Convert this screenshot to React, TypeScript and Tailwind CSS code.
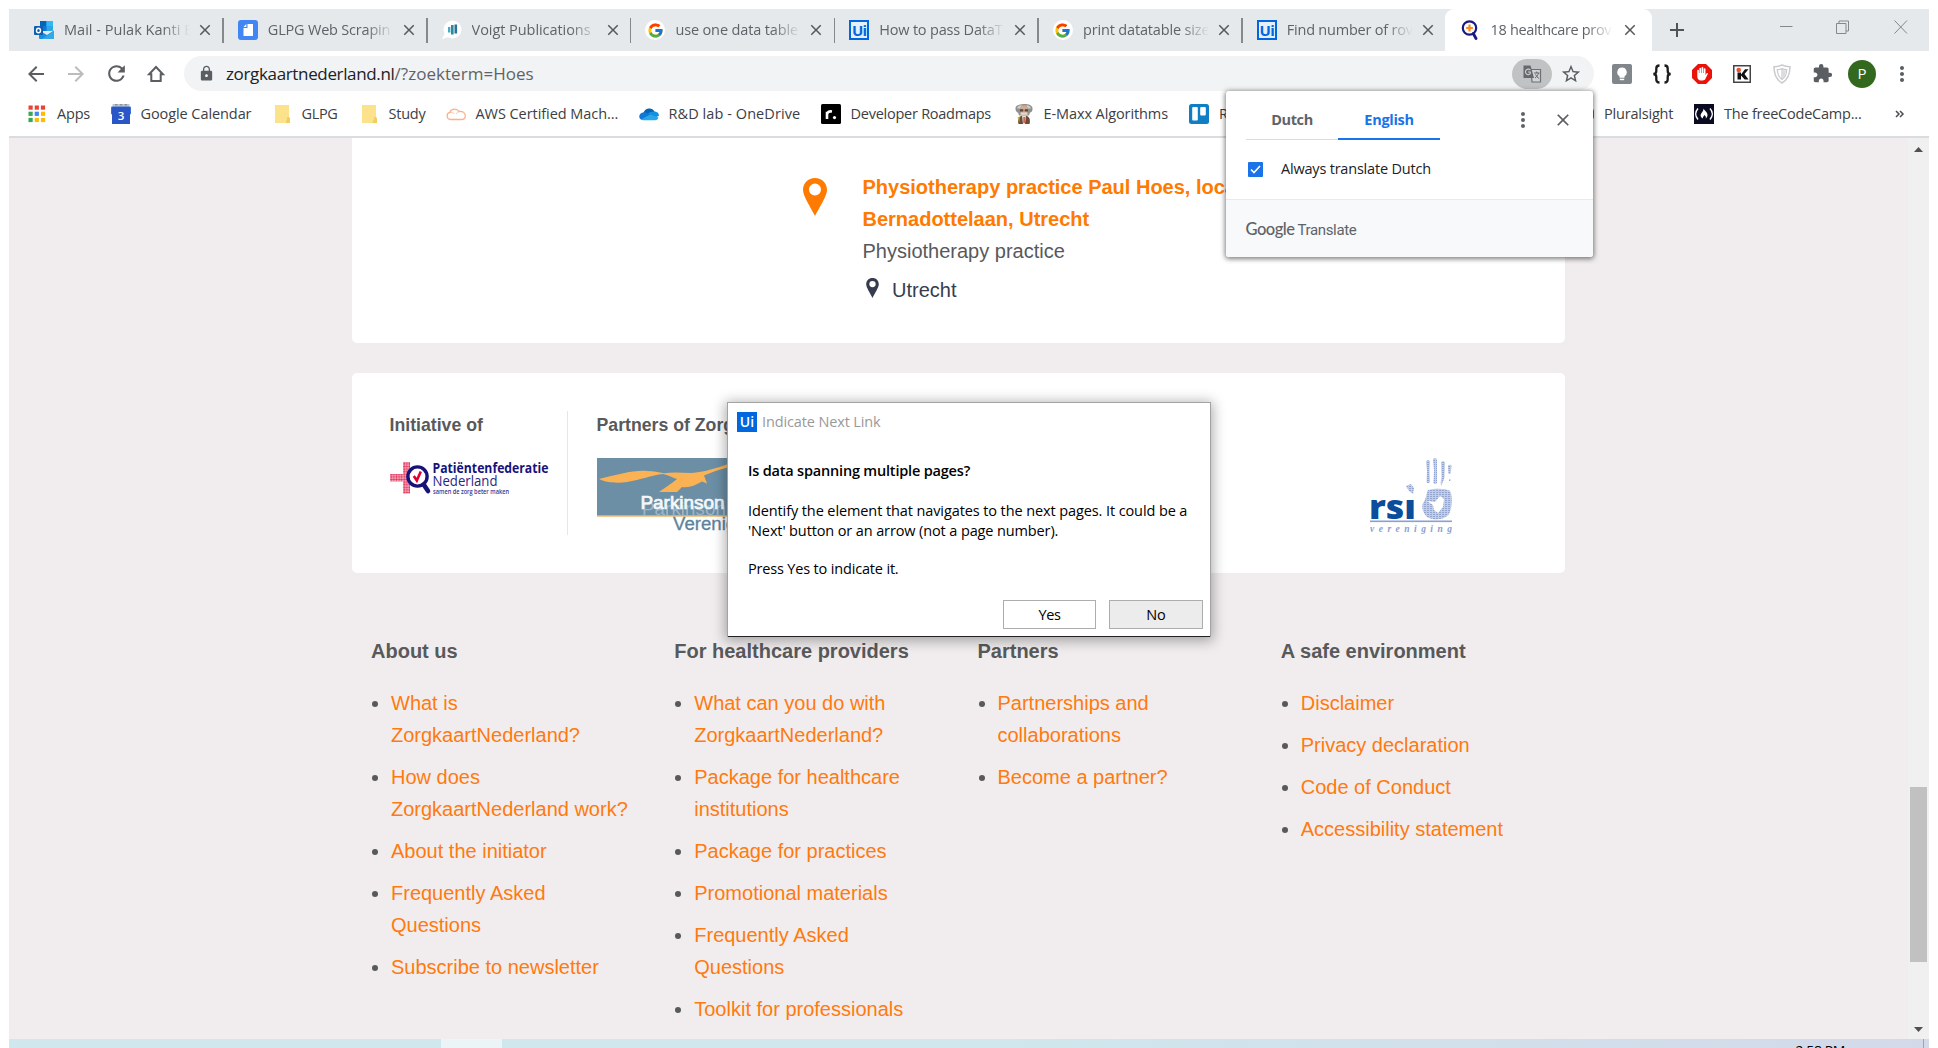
import React from "react";
import {
  MdArrowBack,
  MdArrowForward,
  MdRefresh,
  MdLock,
  MdClose,
  MdAdd,
  MdMoreVert,
  MdExtension,
  MdStarBorder,
} from "react-icons/md";
import { FcGoogle } from "react-icons/fc";

const UI = "font-['Open_Sans','Noto_Sans',sans-serif]";

/* ---------- favicons ---------- */

function OutlookIcon() {
  return (
    <svg width="20" height="20" viewBox="0 0 20 20">
      <rect x="6" y="1" width="13" height="10" rx="1" fill="#28a8ea" />
      <rect x="6" y="1" width="6.5" height="5" fill="#0364b8" />
      <rect x="12.5" y="1" width="6.5" height="5" fill="#32b8f4" />
      <rect x="6" y="6" width="6.5" height="5" fill="#0a78d4" />
      <path d="M5 10.500l8 4.500 7-4.500V18a1 1 0 0 1-1 1H6a1 1 0 0 1-1-1z" fill="#1490df" />
      <path d="M20 10.500L8 19h11a1 1 0 0 0 1-1z" fill="#32a9e7" />
      <rect x="0" y="6" width="9" height="9" rx="1" fill="#0f5fb0" />
      <ellipse cx="4.500" cy="10.500" rx="2" ry="2.300" fill="none" stroke="#fff" strokeWidth="1.400" />
    </svg>
  );
}

function DocIcon() {
  return (
    <svg width="20" height="20" viewBox="0 0 20 20">
      <rect width="20" height="20" rx="3" fill="#4087f5" />
      <path d="M9.500 4H15v12H5.500V8h4z" fill="#fff" />
      <path d="M8.300 4v3H5.500z" fill="#fff" />
    </svg>
  );
}

function VoigtIcon() {
  return (
    <svg width="20" height="20" viewBox="0 0 20 20">
      <circle cx="10.500" cy="9.500" r="9" fill="#fff" />
      <path d="M0 19l3-6 4 4z" fill="#fff" />
      <rect x="6" y="7" width="2.400" height="5.500" fill="#49a9bd" />
      <rect x="9" y="5" width="2.600" height="9.500" fill="#2a8aa6" />
      <rect x="12.500" y="4.500" width="2.600" height="9" fill="#2a7396" />
    </svg>
  );
}

function GoogleIcon() {
  return (
    <span className="flex size-5 items-center justify-center rounded-full bg-white">
      <FcGoogle size={17} />
    </span>
  );
}

function UiIcon() {
  return (
    <span className="flex size-5 items-center justify-center border-2 border-[#0067df] bg-[#e6eef8] font-['Open_Sans',sans-serif] text-[15px] leading-none font-bold tracking-[-0.8px] text-[#0067df]">
      Ui
    </span>
  );
}

function ZorgIcon() {
  return (
    <svg width="20" height="20" viewBox="0 0 20 20">
      <circle cx="9.500" cy="8" r="6.700" fill="#fff" stroke="#1a1a80" strokeWidth="2.200" />
      <path d="M13.300 13.500l2.700 5" stroke="#1a1a80" strokeWidth="2.800" strokeLinecap="round" />
      <path d="M9.500 4.600v6.800M6.100 8h6.800" stroke="#ff8a1e" strokeWidth="2.200" />
    </svg>
  );
}

/* ---------- tab strip ---------- */

const tabs: { title: string; icon: React.ReactNode; cls: string }[] = [
  { title: "Mail - Pulak Kanti B", icon: <OutlookIcon />, cls: "tracking-[0.02px]" },
  { title: "GLPG Web Scrapin", icon: <DocIcon />, cls: "tracking-[-0.2px]" },
  { title: "Voigt Publications", icon: <VoigtIcon />, cls: "tracking-[-0.06px]" },
  { title: "use one data table", icon: <GoogleIcon />, cls: "tracking-[-0.14px]" },
  { title: "How to pass DataT", icon: <UiIcon />, cls: "tracking-[-0.18px]" },
  { title: "print datatable size", icon: <GoogleIcon />, cls: "tracking-[-0.16px]" },
  { title: "Find number of rov", icon: <UiIcon />, cls: "tracking-[-0.22px]" },
];

const FADE =
  "overflow-hidden whitespace-nowrap [mask-image:linear-gradient(to_right,#000_78%,transparent)]";

function TabStrip() {
  return (
    <div className={`flex h-[42px] bg-[#e6e9ec] pl-[11px] text-[14.5px] text-[#5f6368] ${UI}`}>
      {tabs.map((t, i) => (
        <div key={i} className="flex w-[203.8px] shrink-0 items-center pl-[14px]">
          <span className="flex size-5 shrink-0 items-center">{t.icon}</span>
          <span className={`ml-[10px] w-[126px] shrink-0 leading-5 ${FADE} ${t.cls}`}>{t.title}</span>
          <MdClose size={18} className="ml-[6px] shrink-0 text-[#55585c]" />
          {i < 6 && <span className="ml-auto h-[25px] w-[1.5px] shrink-0 bg-[#85898e]" />}
        </div>
      ))}
      <div className="-ml-[2px] flex w-[207px] shrink-0 items-center rounded-t-[9px] bg-white pl-[15px]">
        <span className="flex size-5 shrink-0 items-center">
          <ZorgIcon />
        </span>
        <span className={`ml-[11px] w-[122px] leading-5 tracking-[-0.34px] ${FADE}`}>18 healthcare prov</span>
        <MdClose size={18} className="ml-[8px] shrink-0 text-[#55585c]" />
      </div>
      <div className="flex w-[50px] items-center justify-center">
        <MdAdd size={24} className="text-[#505357]" />
      </div>
      <div className="flex flex-1 items-start justify-end pt-[9px] pr-[3px]">
        <svg width="146" height="20" viewBox="0 0 146 20" fill="none" stroke="#85888b" strokeWidth="1">
          <path d="M0 8.500h12.500" />
          <path d="M56.500 5.500h9.500v10h-9.500zM59 5.500V3h9.500v10h-2.500" />
          <path d="M114.500 2.500l12.500 13M127 2.500l-12.500 13" />
        </svg>
      </div>
    </div>
  );
}

/* ---------- toolbar ---------- */

function Slot({ children }: { children: React.ReactNode }) {
  return <div className="flex w-10 shrink-0 items-center justify-center">{children}</div>;
}

function Toolbar() {
  return (
    <div className={`flex h-[45px] items-center pl-[7px] text-[#5a5d61] ${UI}`}>
      <Slot>
        <MdArrowBack size={24} />
      </Slot>
      <Slot>
        <MdArrowForward size={24} className="text-[#babcbe]" />
      </Slot>
      <Slot>
        <MdRefresh size={25} />
      </Slot>
      <Slot>
        <svg width="18" height="18" viewBox="0 0 18 18" fill="none" stroke="#5a5d61" strokeWidth="2">
          <path d="M9 2L2 9.300h2.300V16h9.400V9.300H16z" />
        </svg>
      </Slot>
      <div className="ml-2 flex h-[35px] w-[1410px] shrink-0 items-center rounded-full bg-[#f1f3f4] pl-[14px] text-[17px]">
        <MdLock size={17} />
        <div className="ml-[11px] flex leading-6">
          <span className="tracking-[-0.35px] text-[#202124]">zorgkaartnederland.nl</span>
          <span className="tracking-[0.04px] text-[#5f6368]">/?zoekterm=Hoes</span>
        </div>
        <span className="ml-auto flex h-[30px] w-10 items-center justify-center rounded-full bg-[#c0c2c3]">
          <svg width="20" height="20" viewBox="0 0 20 20">
            <path d="M9 5.500h9.500V18H10z" fill="#d0d2d3" stroke="#6d7074" strokeWidth="1.200" />
            <path d="M1.500 1.500h7l3.500 12.500H1.500z" fill="#65686c" />
            <path d="M8.300 6.200A2.700 2.700 0 1 0 8.300 9.600V8H6" fill="none" stroke="#c9cbcc" strokeWidth="1.200" />
            <path d="M12 9h5.500M14.800 7.500V9M16.500 9c-.5 2-2 4-3.500 5M13.500 10.500c.8 1.800 2 3 3.500 4" fill="none" stroke="#65686c" strokeWidth="1" />
          </svg>
        </span>
        <MdStarBorder size={22} className="mr-3 ml-2" />
      </div>
      <div className="ml-[8px] flex">
        <Slot>
          <svg width="20" height="20" viewBox="0 0 20 20">
            <rect width="20" height="20" rx="2" fill="#80868b" />
            <path d="M10 3.500a4.700 4.700 0 0 0-2.500 8.700v1.600h5v-1.600A4.700 4.700 0 0 0 10 3.500z" fill="#fff" />
            <rect x="7.800" y="14.700" width="4.400" height="1.500" fill="#fff" />
          </svg>
        </Slot>
        <Slot>
          <svg width="20" height="20" viewBox="0 0 20 20" fill="none" stroke="#1c1c1c" strokeWidth="2.300">
            <path d="M7.500 1.500C5 1.500 4.300 2.500 4.300 4.500v2.500c0 2-1 3-3 3 2 0 3 1 3 3v2.500c0 2 .7 3 3.200 3M12.500 1.500c2.500 0 3.200 1 3.200 3v2.500c0 2 1 3 3 3-2 0-3 1-3 3v2.500c0 2-.7 3-3.200 3" />
          </svg>
        </Slot>
        <Slot>
          <svg width="20" height="20" viewBox="0 0 20 20">
            <path d="M6 0h8l6 6v8l-6 6H6l-6-6V6z" fill="#ea1209" />
            <path d="M5.300 11V6.500a.8.8 0 0 1 1.600 0V9h.5V4.500a.8.8 0 0 1 1.700 0V9h.5V3.800a.8.8 0 0 1 1.700 0V9h.5V5a.8.8 0 0 1 1.700 0v6l1-1.500c.7-.8 1.700-.3 1.300.6l-2.500 5c-.5 1-1.300 1.400-2.700 1.400H9c-2.500 0-3.700-1.800-3.700-4z" fill="#fff" />
          </svg>
        </Slot>
        <Slot>
          <svg width="18" height="18" viewBox="0 0 18 18">
            <rect x=".75" y=".75" width="16.500" height="16.500" fill="#fff" stroke="#444" strokeWidth="1.500" />
            <path d="M4.500 7.500H8v2L12 4.200h3.500L11.500 9l4 5.500h-3.800L8 10.500v4H4.500z" fill="#111" />
            <circle cx="5.700" cy="5" r="2.300" fill="#f04e30" />
          </svg>
        </Slot>
        <Slot>
          <svg width="18" height="20" viewBox="0 0 18 20" fill="none" stroke="#c9cbcd">
            <path d="M9 1C6 2.500 3.500 2.700 1 2.700 1 10 3 15.500 9 19c6-3.500 8-9 8-16.300C14.500 2.700 12 2.500 9 1z" strokeWidth="1.500" />
            <path d="M9 4.500v11M9 4.500C7 5.500 5.500 5.700 4.300 5.700c.2 4.300 1.500 7.500 4.700 9.800 3.200-2.300 4.500-5.500 4.700-9.800C12.500 5.700 11 5.500 9 4.500z" strokeWidth="1.200" />
            <path d="M9 6v9c2.500-2 3.700-4.700 4-8.500z" fill="#dcdddf" stroke="none" />
          </svg>
        </Slot>
        <Slot>
          <MdExtension size={21} />
        </Slot>
        <Slot>
          <span className="flex size-7 items-center justify-center rounded-full bg-[#33691e] text-[15px] text-white">P</span>
        </Slot>
        <Slot>
          <MdMoreVert size={24} />
        </Slot>
      </div>
    </div>
  );
}

/* ---------- bookmarks ---------- */

function AppsIcon() {
  const c = ["#ea4335", "#ea4335", "#ea4335", "#34a853", "#4285f4", "#fbbc05", "#34a853", "#fbbc05", "#fbbc05"];
  return (
    <svg width="20" height="20" viewBox="0 0 20 20">
      {c.map((f, i) => (
        <rect key={i} x={1.5 + (i % 3) * 6.2} y={1.5 + Math.floor(i / 3) * 6.2} width="4.200" height="4.200" fill={f} />
      ))}
    </svg>
  );
}

function CalendarIcon() {
  return (
    <svg width="20" height="20" viewBox="0 0 20 20">
      <path d="M1.500 0h17v3h-17z" fill="#c3c6c9" />
      <path d="M4 0h2.500v1.500H4zM8.800 0h2.500v1.500H8.800zM13.600 0h2.500v1.500h-2.500z" fill="#8f9498" />
      <rect x="0" y="2.500" width="20" height="8" rx="1" fill="#3a6fe0" />
      <path d="M1 3h18v17H1z" fill="#2a56c6" />
      <text x="10" y="16" textAnchor="middle" fontFamily="Open Sans" fontSize="11.500" fontWeight="600" fill="#fff">
        3
      </text>
    </svg>
  );
}

function FolderIcon() {
  return (
    <svg width="20" height="20" viewBox="0 0 20 20">
      <path d="M3 1h14v14.500h1V19H3z" fill="#fde28c" />
      <path d="M15 15.500v-2.500h1.500a1.500 1.500 0 0 1 1.500 1.500V19h-4v-2z" fill="#f3cd62" />
    </svg>
  );
}

function CloudOutlineIcon() {
  return (
    <svg width="20" height="20" viewBox="0 0 20 20" fill="none" stroke="#fbb28c" strokeWidth="1.300">
      <path d="M4.500 15.500a3.600 3.600 0 0 1-.6-7.100c.6-3.700 7-4.800 9-.9 3.600-.8 6.400 1.200 6.400 4.200 0 2.200-1.500 3.800-3.800 3.800z" />
      <path d="M4 8.500c1.800-.6 3.500.3 4.300 1.500M13 7.500c-1.500.5-2.500 1.500-2.800 2.800" strokeWidth=".8" />
    </svg>
  );
}

function OneDriveIcon() {
  return (
    <svg width="20" height="20" viewBox="0 0 20 20">
      <path d="M4.500 9A6 6 0 0 1 15.500 7.500L10 13z" fill="#0364b8" />
      <path d="M4 8.500c2-.6 4 .3 5.500 1.500l3 3-9 3C-1 15.500-.8 9.300 4 8.500z" fill="#0f78d4" />
      <path d="M15 7.500c3.500 0 5 2.200 5 4.300l-4 2-7-4c1-1.500 3.500-2.300 6-2.300z" fill="#1490df" />
      <path d="M2 15.500L11 10.500l8.500 3c-.3 1.500-1.700 2.700-3.500 2.700H4.500c-1 0-1.800-.2-2.500-.7z" fill="#28a8ea" />
    </svg>
  );
}

function RoadmapIcon() {
  return (
    <svg width="20" height="20" viewBox="0 0 20 20">
      <rect width="20" height="20" rx="1.500" fill="#000" />
      <path d="M6 15V7.800M6 10.500C6.300 8 8 7 11 7.500" fill="none" stroke="#fff" strokeWidth="2.600" />
      <circle cx="13.500" cy="13.600" r="1.600" fill="#fff" />
    </svg>
  );
}

function ProfessorIcon() {
  return (
    <svg width="20" height="20" viewBox="0 0 20 20">
      <path d="M1.500 5C1 1.500 5 0 10 0s9 1.500 8.500 5c0 2-1 3.500-2.500 3.500l-1 3H5l-1-3C3 8.500 1.500 7 1.500 5z" fill="#8f908e" />
      <path d="M3 4.500C3.500 2 6 1 8 1.300L6 4.500zM17 4.500C16.500 2 14 1 12 1.300l2 3.200z" fill="#cfcfcc" />
      <ellipse cx="10" cy="6" rx="4" ry="4.700" fill="#d9a789" />
      <path d="M6 5.200h3.300v2.200H6zM10.700 5.200H14v2.200h-3.300z" fill="#4f4742" />
      <path d="M6.500 8.600h7v2.200h-7z" fill="#dedbd6" />
      <path d="M4.500 20c-1-4-.5-8.500 5.500-8.500s6.500 4.500 5.500 8.500z" fill="#6d4a33" />
      <path d="M8 11.500h4l-1 8.500H9z" fill="#e9e3d5" />
      <path d="M9.400 13h1.400v6H9.400z" fill="#c04a3a" />
      <path d="M3.500 13.500l2-1v6z" fill="#c9b23e" />
    </svg>
  );
}

function TrelloIcon() {
  return (
    <svg width="20" height="20" viewBox="0 0 20 20">
      <rect width="20" height="20" rx="2.500" fill="#0e7fc4" />
      <rect x="3.200" y="3" width="5.600" height="13.500" rx="1" fill="#fff" />
      <rect x="11.200" y="3" width="5.600" height="8.500" rx="1" fill="#fff" />
    </svg>
  );
}

function PluralsightIcon() {
  return (
    <svg width="20" height="20" viewBox="0 0 20 20">
      <circle cx="10.500" cy="10" r="10" fill="#e5344e" />
      <path d="M8 5.500l7 4.500-7 4.500z" fill="#fff" />
    </svg>
  );
}

function CampIcon() {
  return (
    <svg width="20" height="20" viewBox="0 0 20 20" fill="none" stroke="#fff">
      <rect width="20" height="20" fill="#0a0a23" stroke="none" />
      <path d="M4 4.500c-3 3.300-3 7.700 0 11M16 4.500c3 3.300 3 7.700 0 11" strokeWidth="1.500" />
      <path d="M9.500 4.500c.8 2 4.300 3.500 4 7-.2 2-1.800 3-1.800 3 .6-1.500-.2-2.500-1.200-3.500-.8 1.500-2 2-1.500 3.500 0 0-2.500-.7-2.400-3.200C6.700 9 9.500 8 9.500 4.500z" fill="#fff" stroke="none" />
    </svg>
  );
}

const bookmarks: { label: string; icon: React.ReactNode; w: string; t: string }[] = [
  { label: "Apps", icon: <AppsIcon />, w: "w-[83.5px]", t: "tracking-[-0.2px]" },
  { label: "Google Calendar", icon: <CalendarIcon />, w: "w-[161px]", t: "tracking-[-0.08px]" },
  { label: "GLPG", icon: <FolderIcon />, w: "w-[87px]", t: "tracking-[-0.34px]" },
  { label: "Study", icon: <FolderIcon />, w: "w-[87px]", t: "tracking-[-0.22px]" },
  { label: "AWS Certified Mach...", icon: <CloudOutlineIcon />, w: "w-[193px]", t: "tracking-[-0.06px]" },
  { label: "R&D lab - OneDrive", icon: <OneDriveIcon />, w: "w-[182px]", t: "tracking-[0.07px]" },
  { label: "Developer Roadmaps", icon: <RoadmapIcon />, w: "w-[193px]", t: "tracking-[-0.25px]" },
  { label: "E-Maxx Algorithms", icon: <ProfessorIcon />, w: "w-[175.5px]", t: "tracking-[-0.1px]" },
  { label: "R", icon: <TrelloIcon />, w: "w-[385px]", t: "tracking-normal" },
  { label: "Pluralsight", icon: <PluralsightIcon />, w: "w-[120px]", t: "tracking-[-0.2px]" },
  { label: "The freeCodeCamp...", icon: <CampIcon />, w: "w-[198px]", t: "tracking-[-0.22px]" },
];

function Bookmarks() {
  return (
    <div className={`flex h-[42px] items-center border-b-2 border-[#dadce0] pb-[4px] pl-[18px] text-[14.5px] text-[#3c4043] ${UI}`}>
      {bookmarks.map((b, i) => (
        <div key={i} className={`flex shrink-0 items-center gap-[10px] ${b.w}`}>
          <span className="size-5 shrink-0">{b.icon}</span>
          <span className={`leading-5 whitespace-nowrap ${b.t}`}>{b.label}</span>
        </div>
      ))}
      <svg width="10" height="8" viewBox="0 0 10 8" className="ml-[3px]" fill="none" stroke="#4a4d51" strokeWidth="1.500">
        <path d="M1 1l3 3-3 3M5 1l3 3-3 3" />
      </svg>
    </div>
  );
}

/* ---------- page ---------- */

function Pin({ w, h, color }: { w: number; h: number; color: string }) {
  return (
    <svg width={w} height={h} viewBox="0 0 24 38" className="shrink-0">
      <path fillRule="evenodd" fill={color} d="M12 0C5 0 0 5 0 12c0 6 8 18 12 26 4-8 12-20 12-26C24 5 19 0 12 0zm0 5.500a6 6 0 1 1 0 12 6 6 0 0 1 0-12z" />
    </svg>
  );
}

function PatientLogo() {
  return (
    <svg width="160" height="36" viewBox="0 0 160 36">
      <defs>
        <pattern id="dots" width="2.600" height="2.600" patternUnits="userSpaceOnUse">
          <rect width="2.600" height="2.600" fill="#f7c3cf" />
          <circle cx="1.300" cy="1.300" r="1.050" fill="#e4345c" />
        </pattern>
      </defs>
      <path d="M13 2h7v31.500h-7zM0 14h20v7.500H0z" fill="url(#dots)" />
      <circle cx="27.500" cy="16.500" r="9.600" fill="#fff" stroke="#17127a" strokeWidth="3.400" />
      <path d="M34 25l4 6" stroke="#17127a" strokeWidth="4.600" strokeLinecap="round" />
      <path d="M23.800 16l3 4.500 4-9" fill="none" stroke="#e4002f" strokeWidth="2.600" />
      <text x="42.500" y="12.800" fontFamily="Open Sans, sans-serif" fontWeight="700" fontSize="14" fill="#17127a" textLength="116" lengthAdjust="spacingAndGlyphs">
        Patiëntenfederatie
      </text>
      <text x="42.500" y="25.500" fontFamily="Open Sans, sans-serif" fontWeight="400" fontSize="14" fill="#2a2683" textLength="65" lengthAdjust="spacingAndGlyphs">
        Nederland
      </text>
      <text x="43" y="33.500" fontFamily="Open Sans, sans-serif" fontWeight="600" fontSize="7" fill="#3a3690" textLength="76" lengthAdjust="spacingAndGlyphs">
        samen de zorg beter maken
      </text>
    </svg>
  );
}

function ParkinsonLogo() {
  return (
    <svg width="240" height="76" viewBox="0 0 240 76">
      <rect width="240" height="57" fill="#6c8fa6" />
      <rect y="57" width="240" height="1.600" fill="#eba94b" />
      <path
        d="M2 21C20 17 36 12 50 13c6 .3 12 1 17 2.300 8-1.300 18-.5 27-.3 14-1 24-4.500 37-9v3.500c-8 1.500-17 5-24 8l3 8-5-2c-7 4-13 6.500-20 5.500l-5 5H62c6-4 13-9 18-13-5-1.500-9-4-14-5C54 17 44 22 30 24c-10 1.500-22 .5-28-3z"
        fill="#fbb254"
      />
      <g fontFamily="Liberation Sans, Arial, sans-serif" fontSize="18" fontWeight="400">
        <text x="45" y="56.500" fill="#a9bfcc" opacity=".8" textLength="84" lengthAdjust="spacingAndGlyphs">Parkinson</text>
        <text x="43.500" y="51" fill="#f5f8fa" stroke="#f5f8fa" strokeWidth=".7" textLength="84" lengthAdjust="spacingAndGlyphs">Parkinson</text>
        <text x="76" y="72" fill="#5d839b" stroke="#5d839b" strokeWidth=".3" textLength="88" lengthAdjust="spacingAndGlyphs">Vereniging</text>
      </g>
    </svg>
  );
}

function RsiLogo() {
  return (
    <svg width="84" height="80" viewBox="0 0 84 80">
      <defs>
        <pattern id="grain" width="3" height="2" patternUnits="userSpaceOnUse">
          <rect width="3" height="2" fill="#c3cde6" />
          <rect width="2" height="1" fill="#93a6d2" />
        </pattern>
      </defs>
      <g fill="url(#grain)">
        <path d="M56 3c2-1.500 4-1 4 1l-.5 8 .5 12c-1 1.500-3 1.500-3.500 0L57 13zM63 1c1.500-1.500 4-1 4 1v23c-1 1.500-3 1.500-3.500 0L64 12zM71 4c1.500-1.500 4-1 4 1l-.5 14c-.5 3-2 5-3 9-1.500-2-.5-6 0-8zM78 7.500c2-1.500 4-1 3.500 1L80.500 16h-2zM79 21h1.500v2H79z" />
        <path d="M58 32c8-2 18-1.500 22 1 3 5 2 18-1 23-4 6-16 7-22 3-4-4-6-10-4-14 3-3 3-9 5-13z" />
        <path d="M36 28l5-2 3 4-1 6-4-3z" />
      </g>
      <path d="M57 43l8 1 5-6 4 3-1 8-5 6-4-3-1-5z" fill="#fff" />
      <text x="-1" y="60.500" fontFamily="Open Sans, sans-serif" fontWeight="800" fontSize="33" fill="#0b4c9c" textLength="47" lengthAdjust="spacingAndGlyphs">
        rsı
      </text>
      <rect x="0" y="62.500" width="82" height="1.600" fill="#8aa0cf" />
      <text x="0" y="74" fontFamily="Liberation Serif, serif" fontStyle="italic" fontWeight="700" fontSize="9.500" fill="#8b9ecd" textLength="82">
        vereniging
      </text>
    </svg>
  );
}

const footer: { title: string; links: string[] }[] = [
  {
    title: "About us",
    links: [
      "What is ZorgkaartNederland?",
      "How does ZorgkaartNederland work?",
      "About the initiator",
      "Frequently Asked Questions",
      "Subscribe to newsletter",
    ],
  },
  {
    title: "For healthcare providers",
    links: [
      "What can you do with ZorgkaartNederland?",
      "Package for healthcare institutions",
      "Package for practices",
      "Promotional materials",
      "Frequently Asked Questions",
      "Toolkit for professionals",
    ],
  },
  { title: "Partners", links: ["Partnerships and collaborations", "Become a partner?"] },
  {
    title: "A safe environment",
    links: ["Disclaimer", "Privacy declaration", "Code of Conduct", "Accessibility statement"],
  },
];

function Page() {
  return (
    <div className="flex h-[901px] overflow-hidden bg-[#f1edee] font-['Liberation_Sans',Arial,sans-serif] text-[20px] leading-8 text-[#58595b]">
      <main className="w-[1899px] shrink-0 pl-[343px]">
        <section className="flex h-[205px] w-[1213px] rounded-b-[5px] bg-white pt-[33px] pl-[451px]">
          <div className="w-[59.5px] pt-[7px]">
            <Pin w={24} h={38} color="#ff7a00" />
          </div>
          <div className="w-[520px]">
            <div className="font-bold text-[#ff7a00]">
              Physiotherapy practice Paul Hoes, loca
              <br />
              Bernadottelaan, Utrecht
            </div>
            <div>Physiotherapy practice</div>
            <div className="mt-[7px] flex items-center text-[#363c50]">
              <span className="-mt-1 ml-[3px]">
                <Pin w={13} h={20} color="#363c50" />
              </span>
              <span className="ml-[13.5px]">Utrecht</span>
            </div>
          </div>
        </section>

        <section className="mt-[30px] flex h-[200px] w-[1213px] rounded-[5px] bg-white pt-[38px] pl-[37.5px] text-[17.7px] leading-7 font-bold">
          <div className="h-[124px] w-[178px] shrink-0 border-r border-[#e6e6e6]">
            <div>Initiative of</div>
            <div className="mt-[21px]">
              <PatientLogo />
            </div>
          </div>
          <div className="ml-[29px] w-[773px] shrink-0">
            <div>Partners of Zorg</div>
            <div className="mt-[19px]">
              <ParkinsonLogo />
            </div>
          </div>
          <div className="pt-[47px]">
            <RsiLogo />
          </div>
        </section>

        <footer className="mt-[62px] flex pl-[19px]">
          {footer.map((c) => (
            <div key={c.title} className="w-[303.25px] shrink-0">
              <h3 className="font-bold whitespace-nowrap">{c.title}</h3>
              <ul className="mt-5 flex w-[263px] flex-col gap-[10px]">
                {c.links.map((l) => (
                  <li key={l} className="flex">
                    <span className="mt-[14px] mr-[13px] ml-[1px] size-[6px] shrink-0 rounded-full bg-[#58595b]" />
                    <a className="w-[243px] shrink-0 text-[#ff7a0f]">{l}</a>
                  </li>
                ))}
              </ul>
            </div>
          ))}
        </footer>
      </main>
      <aside className="flex w-[21px] flex-col items-center bg-[#f0f0f0] pt-[9px]">
        <svg width="9" height="5" viewBox="0 0 9 5" fill="#505050">
          <path d="M0 5L4.500 0 9 5z" />
        </svg>
        <div className="mt-[635px] h-[175px] w-[17px] bg-[#c1c1c1]" />
        <svg width="9" height="5" viewBox="0 0 9 5" fill="#505050" className="mt-[65px]">
          <path d="M0 0h9L4.500 5z" />
        </svg>
      </aside>
    </div>
  );
}

/* ---------- overlays ---------- */

function TranslatePopup() {
  return (
    <div className={`absolute top-[91px] left-[1226px] h-[166px] w-[367px] overflow-hidden rounded-[3px] bg-white text-[14.5px] shadow-[0_1px_5px_1px_rgba(0,0,0,0.5)] ${UI}`}>
      <div className="flex h-[49px] items-end pl-[20px]">
        <div className="h-[40px] w-[92px] border-b border-[#dadce0] pt-[10px] text-center leading-5 font-bold tracking-[-0.4px] text-[#5f6368]">
          Dutch
        </div>
        <div className="h-[40px] w-[102px] border-b-2 border-[#1a73e8] pt-[10px] text-center leading-5 font-bold tracking-[-0.3px] text-[#1a73e8]">
          English
        </div>
        <MdMoreVert size={24} className="mb-[8px] ml-[71px] text-[#5f6368]" />
        <MdClose size={20} className="mb-[10px] ml-[18px] text-[#5a5d61]" />
      </div>
      <div className="flex h-[60px] items-center border-b border-[#e8eaed] pb-px pl-[22px]">
        <span className="flex size-[15px] items-center justify-center rounded-[1px] bg-[#1a73e8]">
          <svg width="11" height="9" viewBox="0 0 11 9" fill="none" stroke="#fff" strokeWidth="1.600">
            <path d="M1 4.500l3 3L10 1" />
          </svg>
        </span>
        <span className="ml-[18px] tracking-[-0.2px] text-[#202124]">Always translate Dutch</span>
      </div>
      <div className="flex h-[57px] items-baseline gap-[3px] bg-[#f8f9fa] pt-[17px] pl-[19.5px] text-[#5f6368]">
        <span className="font-[Lato,sans-serif] text-[16.5px] font-medium tracking-[-0.5px]">Google</span>
        <span className="font-['Roboto',sans-serif] text-[15px] tracking-[-0.35px]">Translate</span>
      </div>
    </div>
  );
}

function Dialog() {
  return (
    <div className={`absolute top-[402px] left-[727px] flex h-[235px] w-[484px] flex-col border border-b-0 border-[#a3a3a3] bg-white text-[14.5px] leading-5 text-black shadow-[0_2px_12px_2px_rgba(0,0,0,0.32)] ${UI}`}>
      <div className="flex items-center pt-2 pl-[9px]">
        <span className="flex size-5 items-center justify-center bg-[#0067df] text-[14px] leading-none font-semibold text-white">Ui</span>
        <span className="ml-[5px] pt-px tracking-[-0.13px] text-[#999]">Indicate Next Link</span>
      </div>
      <div className="mt-[29px] pl-5">
        <p className="font-semibold tracking-[-0.19px]">Is data spanning multiple pages?</p>
        <p className="mt-5 tracking-[-0.1px] whitespace-nowrap">
          Identify the element that navigates to the next pages. It could be a
          <br />
          <span className="tracking-[-0.12px]">'Next' button or an arrow (not a page number).</span>
        </p>
        <p className="mt-[18px] tracking-[-0.17px]">Press Yes to indicate it.</p>
      </div>
      <div className="mt-[21px] flex justify-end gap-[13px] pr-[7px]">
        <button className="h-[29px] w-[93px] border border-[#adadad] bg-white tracking-[-0.4px]">Yes</button>
        <button className="h-[29px] w-[94px] border border-[#adadad] bg-[#ececec]">No</button>
      </div>
      <div className="mt-auto h-px bg-[#222]" />
    </div>
  );
}

export default function App() {
  return (
    <div className="relative h-[1048px] w-[1938px] overflow-hidden bg-white pt-[9px] pl-[9px]">
      <div className="w-[1920px]">
        <TabStrip />
        <Toolbar />
        <Bookmarks />
        <Page />
        <div className="flex h-[9px] overflow-hidden bg-linear-to-r from-[#cfe7ed] from-50% to-[#d3d9e9]">
          <div className="ml-[432px] h-full w-[61px] bg-[#ebf4f7]" />
          <div className={`mt-[2px] mr-[78px] ml-auto text-[14px] leading-5 tracking-[-0.4px] text-black ${UI}`}>2:58 PM</div>
          <div className="mr-[5px] h-full w-px bg-[#9ba6b5]" />
        </div>
      </div>
      <TranslatePopup />
      <Dialog />
    </div>
  );
}
